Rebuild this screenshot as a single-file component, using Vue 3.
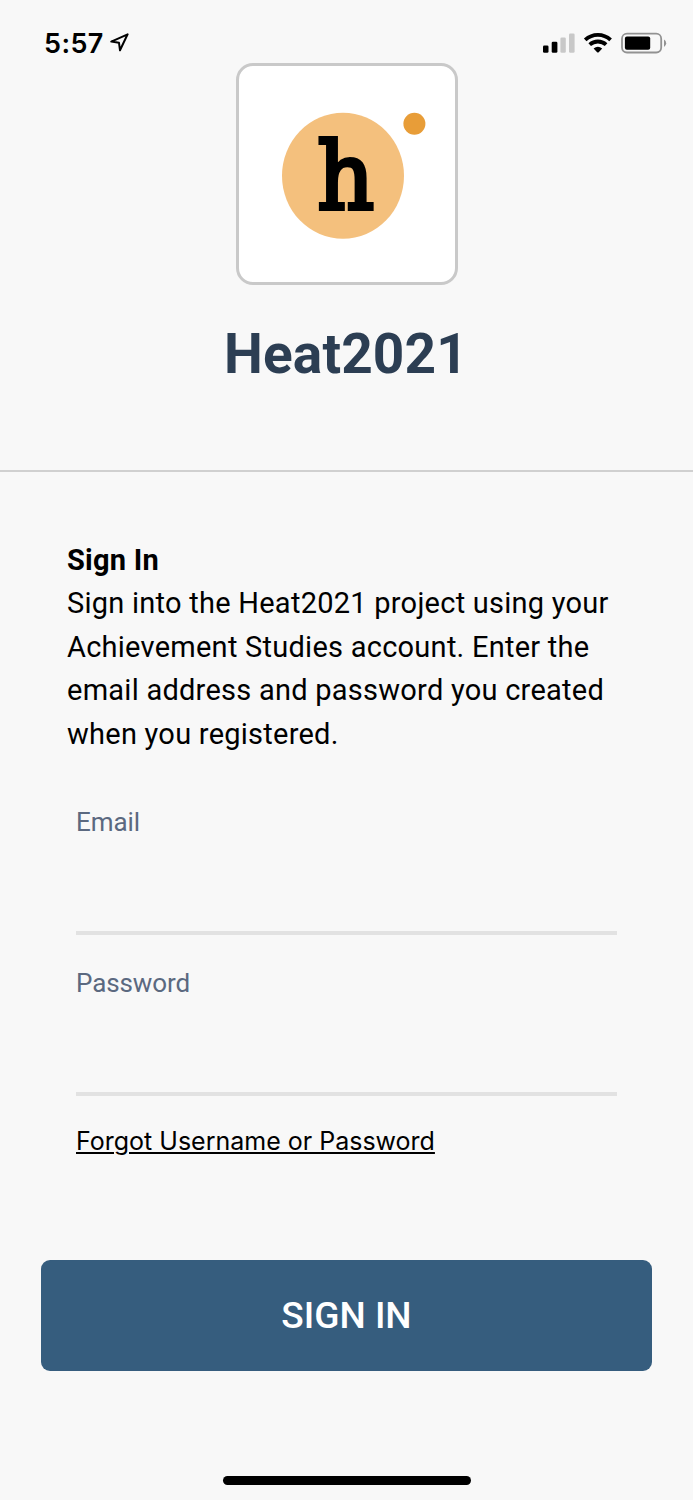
<script setup>
import { ref } from 'vue'

const email = ref('')
const password = ref('')
</script>

<template>
  <main class="screen">
    <div class="status">
      <span class="time">5:57</span>
      <svg class="locate" width="20" height="20" viewBox="0 0 20 20">
        <path d="M17.6 1.3 1.3 8.6 9 9.8 10 17.3Z" fill="none" stroke="#000" stroke-width="2" stroke-linejoin="round" />
      </svg>
      <svg class="indicators" width="126" height="24" viewBox="0 0 126 24">
        <rect x="1" y="14.5" width="5.5" height="7.2" rx="1.3" />
        <rect x="9.7" y="10.8" width="5.7" height="10.9" rx="1.3" />
        <g fill="#c8c8c8">
          <rect x="18.4" y="6.5" width="5.4" height="15.2" rx="1.3" />
          <rect x="27" y="2.5" width="5.6" height="19.2" rx="1.3" />
        </g>
        <g fill="none" stroke="#000" stroke-width="3.8">
          <path d="M43.2 8.8C50.5 2.1 61.3 2.1 68.6 8.8" />
          <path d="M47.7 13.7C52.4 9.4 59.4 9.4 64.1 13.7" />
        </g>
        <path d="M51.6 17.4Q55.9 14 60.2 17.4L56.7 21.2Q55.9 21.9 55.1 21.2Z" />
        <rect x="80" y="2.7" width="39.2" height="18.8" rx="5" fill="none" stroke="#929292" stroke-width="1.8" />
        <rect x="82.9" y="5.5" width="25.3" height="13.3" rx="2" />
        <path d="M122 8.5Q124.2 9.8 124.2 12.2T122 16Z" fill="#929292" />
      </svg>
    </div>

    <header class="brand">
      <div class="logo">
        <svg width="216" height="216" viewBox="0 0 216 216">
          <ellipse cx="104" cy="109.8" rx="61" ry="63" fill="#f4c07d" />
          <circle cx="175.4" cy="57.8" r="11" fill="#e89d38" />
          <text class="letter" transform="translate(78.2 142.6) scale(.95 1)">h</text>
        </svg>
      </div>
      <h1>Heat2021</h1>
    </header>

    <form @submit.prevent>
      <section class="intro">
        <h2>Sign In</h2>
        <p>Sign into the Heat2021 project using your<br />Achievement Studies account. Enter the<br />email address and password you created<br />when you registered.</p>
      </section>
      <label class="field">
        <span>Email</span>
        <input v-model="email" type="email" />
      </label>
      <label class="field">
        <span>Password</span>
        <input v-model="password" type="password" />
      </label>
      <a class="forgot" href="#">Forgot Username or Password</a>
      <button class="submit" type="submit">SIGN IN</button>
    </form>
    <div class="home-bar"></div>
  </main>
</template>

<style>
body { margin: 0; background: #f8f8f8; }
</style>

<style scoped>
* { box-sizing: border-box; }
.screen {
  display: flex;
  flex-direction: column;
  height: 1500px;
  background: #f8f8f8;
  color: #000;
  font-family: Roboto, sans-serif;
  overflow: hidden;
}
.status {
  display: flex;
  align-items: flex-start;
  height: 63px;
  padding: 31px 25px 0 44px;
}
.time {
  width: 66px;
  padding-top: 1px;
  font: 600 27px/24px Inter, sans-serif;
  letter-spacing: 0.4px;
}
.locate { margin-top: 2px; }
.indicators { margin-left: auto; }
.brand {
  display: flex;
  flex-direction: column;
  align-items: center;
  height: 409px;
  border-bottom: 2px solid #d0d0d0;
}
.logo {
  width: 222px;
  height: 222px;
  border: 3px solid #c9c9c9;
  border-radius: 17px;
  background: #fff;
}
.logo svg { display: block; }
.letter {
  font: 400 93px "DejaVu Serif", serif;
  stroke: #000;
  stroke-width: 4.2px;
}
h1 {
  margin: 37px 1px 0 0;
  color: #2c3e53;
  font-size: 55px;
  font-weight: 700;
  letter-spacing: 0.15px;
  line-height: 64px;
}
form { display: flex; flex-direction: column; }
.intro {
  margin: 67px 0 0 67px;
  font-size: 29px;
  line-height: 43.4px;
}
h2 {
  margin: 0;
  font-size: 29px;
  font-weight: 700;
  letter-spacing: 0.25px;
  line-height: 43.4px;
}
p { margin: 0; letter-spacing: 0.25px; white-space: nowrap; }
.field {
  display: flex;
  flex-direction: column;
  height: 161px;
  margin: 0 76px;
  color: #5b6980;
  font-size: 26px;
  letter-spacing: -0.1px;
  line-height: 32px;
}
.intro + .field { margin-top: 50px; }
.field input {
  height: 97px;
  padding: 0;
  border: 0;
  border-bottom: 4px solid #e2e2e2;
  background: transparent;
  font: inherit;
  outline: 0;
}
.forgot {
  align-self: flex-start;
  margin: -3px 0 0 76px;
  color: #000;
  font: 400 25px/32px Inter, sans-serif;
  text-decoration: underline;
  text-decoration-thickness: 2px;
  text-underline-offset: 2px;
}
.submit {
  height: 111px;
  margin: 103px 41px 0;
  padding: 0;
  border: 0;
  border-radius: 9px;
  background: #365d7e;
  color: #fff;
  font: 500 37px/44px Roboto, sans-serif;
}
.home-bar {
  width: 248px;
  height: 9px;
  margin: auto auto 15px;
  border-radius: 5px;
  background: #000;
}
</style>
